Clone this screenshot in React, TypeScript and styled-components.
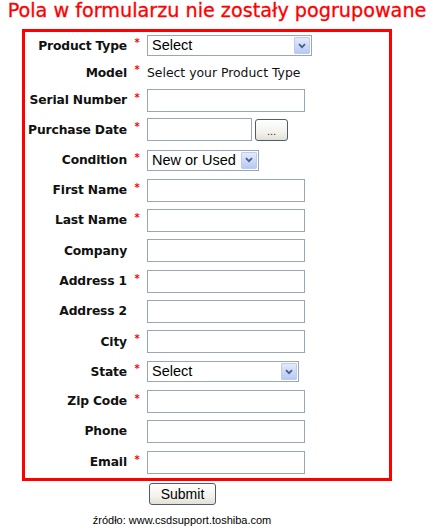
import React from 'react';
import styled, { createGlobalStyle } from 'styled-components';

const GlobalStyle = createGlobalStyle`
  html, body {
    margin: 0;
    padding: 0;
    background: #fff;
  }
  body {
    font-family: "DejaVu Sans", Verdana, sans-serif;
    color: #000;
  }
`;

const Page = styled.div`
  width: 434px;
  height: 530px;
  overflow: hidden;
`;

const Title = styled.h1`
  margin: 0;
  font: normal 19.2px/22px "DejaVu Sans", Verdana, sans-serif;
  color: #f00;
  text-align: center;
  white-space: nowrap;
  -webkit-text-stroke: 0.3px #f00;
`;

const FormBox = styled.div`
  margin: 7px 0 0 22px;
  width: 364px;
  height: 446px;
  border: 3px solid #f00;
  display: flex;
  flex-direction: column;
`;

const Row = styled.div<{ $h: number }>`
  height: ${(p) => p.$h}px;
  display: grid;
  grid-template-columns: 102px 20px 1fr;
  align-items: center;
`;

const Label = styled.label`
  text-align: right;
  font: bold 12.3px/14px "DejaVu Sans", Verdana, sans-serif;
  letter-spacing: -0.15px;
  color: #111;
  white-space: nowrap;
`;

const Star = styled.span`
  text-align: center;
  color: #f00;
  font: bold 10px/10px "DejaVu Sans", Verdana, sans-serif;
  margin-top: -5px;
`;

const Field = styled.div`
  display: flex;
  align-items: center;
  gap: 3px;
`;

const StaticText = styled.span`
  font: normal 12.4px/14px "DejaVu Sans", Verdana, sans-serif;
  color: #111;
  white-space: nowrap;
`;

const TextBox = styled.input<{ $w: number }>`
  box-sizing: border-box;
  width: ${(p) => p.$w}px;
  height: 23px;
  margin: 0;
  padding: 0 3px;
  border: 1px solid #98a6b8;
  background: #fff;
  outline: none;
`;

const SelectBox = styled.div<{ $w: number }>`
  box-sizing: border-box;
  width: ${(p) => p.$w}px;
  height: 21px;
  border: 1px solid #98a6b8;
  background: #fff;
  display: flex;
  align-items: stretch;
  padding: 1px;
`;

const SelectText = styled.span`
  flex: 1;
  padding-left: 3px;
  font: normal 14.5px/17px "Liberation Sans", Arial, sans-serif;
  white-space: nowrap;
  overflow: hidden;
`;

const ArrowBox = styled.span`
  box-sizing: border-box;
  width: 16px;
  border: 1px solid #bccbee;
  border-radius: 1px;
  background: linear-gradient(#e2eafc, #b7c9f4);
  display: flex;
  align-items: center;
  justify-content: center;
`;

const XpButton = styled.button<{ $w: number }>`
  box-sizing: border-box;
  width: ${(p) => p.$w}px;
  height: 22px;
  margin: 0;
  padding: 0;
  border: 1px solid #4b5d72;
  border-radius: 3px;
  background: linear-gradient(#ffffff, #f3f2ec 60%, #e2e0d6);
  font: normal 14px/18px "Liberation Sans", Arial, sans-serif;
  color: #000;
`;

const DotsButton = styled(XpButton)`
  font-size: 11px;
  color: #333;
  padding-top: 2px;
`;

const Footer = styled.div`
  width: 364px;
  display: flex;
  flex-direction: column;
  align-items: center;
  padding-top: 2px;
  gap: 8px;
`;

const SubmitWrap = styled.div`
  padding-left: 1px;
`;

const Source = styled.div`
  font: normal 11px/14px "Liberation Sans", Arial, sans-serif;
  color: #000;
  white-space: nowrap;
`;

function Chevron() {
  return (
    <svg width="8" height="6" viewBox="0 0 8 6">
      <path d="M1 1.2 L4 4.2 L7 1.2" fill="none" stroke="#4a5f86" strokeWidth="1.8" />
    </svg>
  );
}

function Select({ text, w }: { text: string; w: number }) {
  return (
    <SelectBox $w={w}>
      <SelectText>{text}</SelectText>
      <ArrowBox>
        <Chevron />
      </ArrowBox>
    </SelectBox>
  );
}

type RowDef = {
  label: string;
  required: boolean;
  h: number;
  kind: 'text' | 'select' | 'date' | 'static';
  text?: string;
  w?: number;
};

const rows: RowDef[] = [
  { label: 'Product Type', required: true, h: 27, kind: 'select', text: 'Select', w: 165 },
  { label: 'Model', required: true, h: 27, kind: 'static', text: 'Select your Product Type' },
  { label: 'Serial Number', required: true, h: 28, kind: 'text' },
  { label: 'Purchase Date', required: true, h: 31, kind: 'date' },
  { label: 'Condition', required: true, h: 30, kind: 'select', text: 'New or Used', w: 112 },
  { label: 'First Name', required: true, h: 30, kind: 'text' },
  { label: 'Last Name', required: true, h: 30, kind: 'text' },
  { label: 'Company', required: false, h: 31, kind: 'text' },
  { label: 'Address 1', required: true, h: 30, kind: 'text' },
  { label: 'Address 2', required: false, h: 30, kind: 'text' },
  { label: 'City', required: true, h: 31, kind: 'text' },
  { label: 'State', required: true, h: 29, kind: 'select', text: 'Select', w: 152 },
  { label: 'Zip Code', required: true, h: 30, kind: 'text' },
  { label: 'Phone', required: false, h: 30, kind: 'text' },
  { label: 'Email', required: true, h: 32, kind: 'text' },
];

function renderField(r: RowDef) {
  switch (r.kind) {
    case 'select':
      return <Select text={r.text ?? ''} w={r.w ?? 150} />;
    case 'static':
      return <StaticText>{r.text}</StaticText>;
    case 'date':
      return (
        <>
          <TextBox $w={105} />
          <DotsButton $w={33}>...</DotsButton>
        </>
      );
    default:
      return <TextBox $w={158} />;
  }
}

export default function App() {
  return (
    <Page>
      <GlobalStyle />
      <Title>Pola w formularzu nie zostały pogrupowane</Title>
      <FormBox>
        {rows.map((r) => (
          <Row key={r.label} $h={r.h}>
            <Label>{r.label}</Label>
            <Star>{r.required ? '*' : ''}</Star>
            <Field>{renderField(r)}</Field>
          </Row>
        ))}
      </FormBox>
      <Footer>
        <SubmitWrap>
          <XpButton $w={67}>Submit</XpButton>
        </SubmitWrap>
        <Source>źródło: www.csdsupport.toshiba.com</Source>
      </Footer>
    </Page>
  );
}
